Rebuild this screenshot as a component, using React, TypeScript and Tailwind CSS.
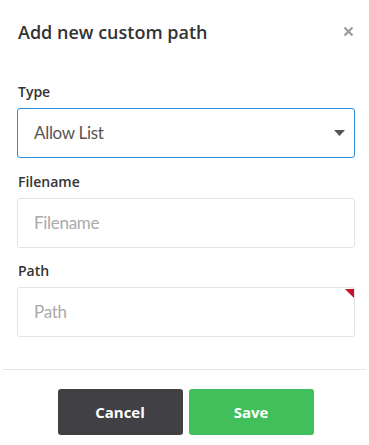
import React from "react";

export default function App() {
  const heading = { fontFamily: '"Open Sans", "Noto Sans", sans-serif' };
  const body = { fontFamily: 'Lato, "Open Sans", sans-serif' };
  return (
    <div className="w-[369px] h-[445px] bg-white flex flex-col" style={heading}>
      <div className="flex items-center justify-between pl-[18px] pr-[15px] pt-[19px] h-[46px]">
        <h2 className="text-[18px] font-semibold text-[#333]">Add new custom path</h2>
        <svg width="11" height="11" viewBox="0 0 11 11" className="mt-[-2px]">
          <path d="M1.5 1.5 L9.5 9.5 M9.5 1.5 L1.5 9.5" stroke="#9a9a9a" strokeWidth="2.2" strokeLinecap="butt" />
        </svg>
      </div>
      <div className="flex flex-col pl-[17px] pr-[14px] pt-[37px]">
        <label className="text-[14px] font-semibold text-[#333] leading-[18px] pl-[1px]">Type</label>
        <div className="mt-[7px] h-[50px] border border-[#2f8fdc] rounded-[3px] flex items-center justify-between pl-[16px] pr-[9px]">
          <span className="text-[17px] text-[#555] tracking-[-0.3px]" style={body}>Allow List</span>
          <svg width="11" height="6" viewBox="0 0 11 6">
            <path d="M0 0 L11 0 L5.5 6 Z" fill="#555" />
          </svg>
        </div>
        <label className="mt-[15px] text-[14px] font-semibold text-[#333] leading-[18px] pl-[1px]">Filename</label>
        <div className="mt-[7px] h-[50px] border border-[#e3e3e3] rounded-[3px] flex items-center pl-[16px]">
          <span className="text-[17px] text-[#aaa] tracking-[-0.3px]" style={body}>Filename</span>
        </div>
        <label className="mt-[14px] text-[14px] font-semibold text-[#333] leading-[18px] pl-[1px]">Path</label>
        <div className="relative mt-[7px] h-[50px] border border-[#e3e3e3] rounded-[3px] flex items-center pl-[16px]">
          <span className="text-[17px] text-[#aaa] tracking-[-0.3px]" style={body}>Path</span>
          <svg width="9" height="9" viewBox="0 0 9 9" className="absolute top-[1px] right-[0px]">
            <path d="M0 0 L9 0 L9 9 Z" fill="#c8102e" />
          </svg>
        </div>
      </div>
      <div className="mt-[32px] mx-[3px] h-px bg-[#e6e6e6]" />
      <div className="flex justify-center gap-[6px] pt-[19px] pl-[2px]">
        <button className="w-[125px] h-[46px] rounded-[3px] bg-[#414045] text-white text-[15px] font-bold">Cancel</button>
        <button className="w-[125px] h-[46px] rounded-[3px] bg-[#41bf5a] text-white text-[15px] font-bold">Save</button>
      </div>
    </div>
  );
}
